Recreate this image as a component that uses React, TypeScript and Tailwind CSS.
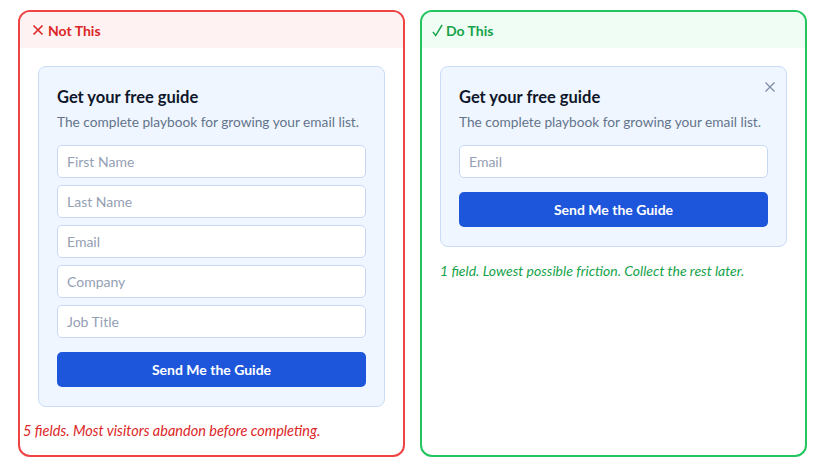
function Field({ label }: { label: string }) {
  return (
    <div className="h-[33px] rounded-[5px] border border-[#c7d7f5] bg-white px-[9px] flex items-center text-[14px] text-[#94a0b4]">
      {label}
    </div>
  )
}

function GuideCard({ fields, closable }: { fields: string[]; closable?: boolean }) {
  return (
    <div className="relative rounded-lg border border-[#c9dbf7] bg-[#eff6ff] px-[18px] pt-[19px] pb-[19px]">
      {closable && (
        <svg
          viewBox="0 0 12 12"
          className="absolute right-[10px] top-[14px] w-[12px] h-[12px] text-[#7c8aa5]"
          fill="none"
          stroke="currentColor"
          strokeWidth="1.2"
        >
          <path d="M1.5 1.5l9 9M10.5 1.5l-9 9" />
        </svg>
      )}
      <h3 className="text-[16.5px] font-bold leading-[22px] text-[#0f172a]">Get your free guide</h3>
      <p className="mt-[4px] whitespace-nowrap text-[13.7px] leading-[20px] text-[#64748b]">
        The complete playbook for growing your email list.
      </p>
      <div className="mt-[13px] flex flex-col gap-[7px]">
        {fields.map((f) => (
          <Field key={f} label={f} />
        ))}
      </div>
      <button className="mt-[14px] w-full h-[35px] rounded-[5px] bg-[#1d56db] text-white text-[14px] font-bold">
        Send Me the Guide
      </button>
    </div>
  )
}

export default function App() {
  return (
    <div
      className="w-[825px] h-[471px] bg-white flex gap-[15px] px-[18px] pt-[10px] pb-[14px]"
      style={{ fontFamily: "Lato, 'Noto Sans', sans-serif" }}
    >
      {/* Bad example */}
      <div className="flex-1 rounded-xl border-2 border-[#ef4444] overflow-hidden flex flex-col">
        <div className="h-[36px] shrink-0 bg-[#fef2f2] flex items-center gap-[4px] px-[12px] text-[14px] font-bold text-[#dc2626]">
          <svg viewBox="0 0 12 12" className="w-[12px] h-[12px]" fill="none" stroke="currentColor" strokeWidth="1.6">
            <path d="M1.5 1.5l9 9M10.5 1.5l-9 9" />
          </svg>
          <span>Not This</span>
        </div>
        <div className="px-[18px] pt-[18px]">
          <GuideCard fields={["First Name", "Last Name", "Email", "Company", "Job Title"]} />
          <p className="mt-[14px] -ml-[15px] whitespace-nowrap text-[14.5px] leading-[20px] italic text-[#dc2626]">
            5 fields. Most visitors abandon before completing.
          </p>
        </div>
      </div>

      {/* Good example */}
      <div className="flex-1 rounded-xl border-2 border-[#22c55e] overflow-hidden flex flex-col">
        <div className="h-[36px] shrink-0 bg-[#f0fdf4] flex items-center gap-[3px] px-[10px] text-[14px] font-bold text-[#16a34a]">
          <svg viewBox="0 0 12 14" className="w-[11px] h-[13px]" fill="none" stroke="currentColor" strokeWidth="1.6">
            <path d="M1 8.5l3 4L11 1" />
          </svg>
          <span>Do This</span>
        </div>
        <div className="px-[18px] pt-[18px]">
          <GuideCard fields={["Email"]} closable />
          <p className="mt-[14px] whitespace-nowrap text-[14px] leading-[20px] italic text-[#16a34a]">
            1 field. Lowest possible friction. Collect the rest later.
          </p>
        </div>
      </div>
    </div>
  )
}
